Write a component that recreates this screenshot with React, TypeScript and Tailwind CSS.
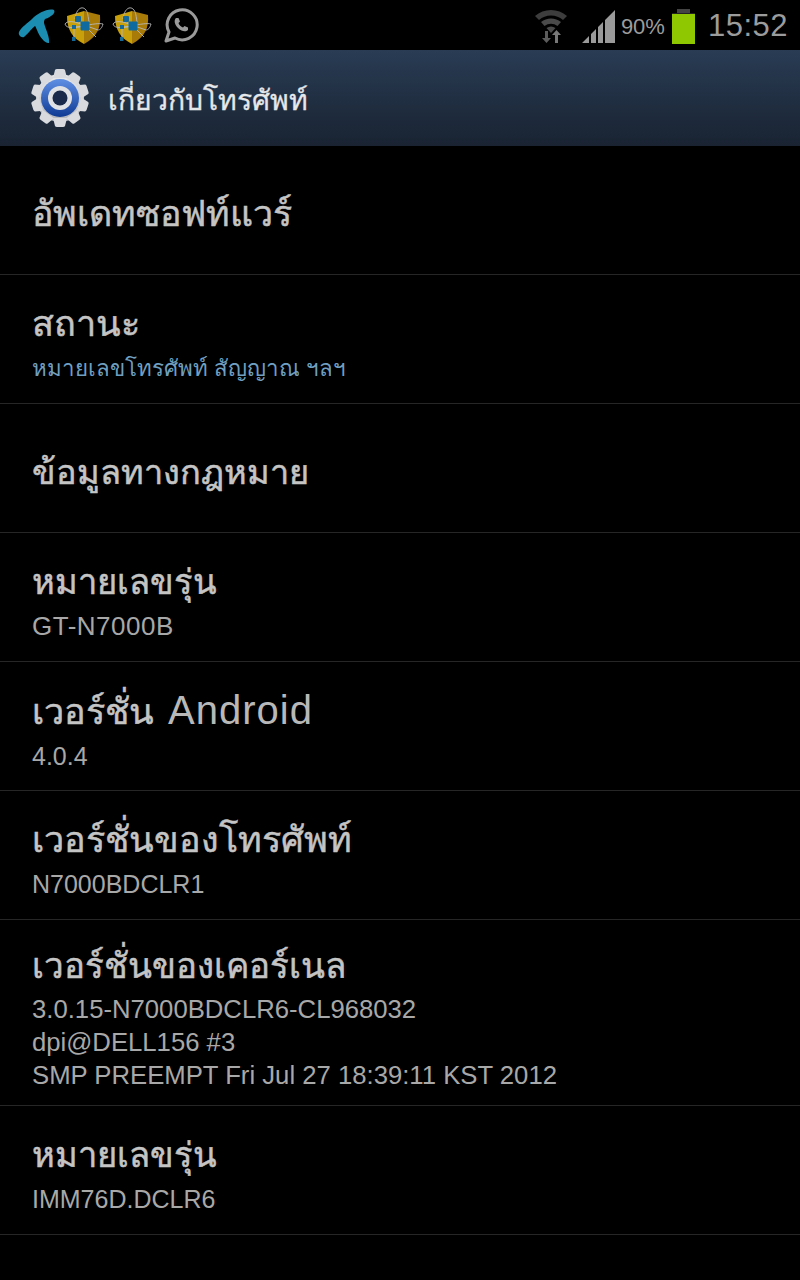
const font = "font-['Liberation_Sans','Noto_Sans','DejaVu_Sans',sans-serif]";

function Shield() {
  return (
    <svg width="40" height="42" viewBox="0 0 40 42">
      <path d="M20 7 L36 11 C37 24 33 33 20 40 Z" fill="#a87a08" />
      <path d="M20 7 L3 12 C3 25 8 34 20 40 Z" fill="#c8a00c" />
      <path d="M1 20 C3 17 8 17 14 19 L34 26 M1 20 C2 25 12 24 20 22 C28 20 36 19 39 20 C38 24 36 26 34 26 M11 15 L21 22 M10 23 L21 22 M11 15 C12 5 18 1 22 6 C24 9 24 12 25 18 M21 22 L32 33 M10 23 L10 34" stroke="#b9b9b9" strokeWidth="0.9" fill="none" />
      <rect x="11" y="12" width="6" height="6" fill="#14689a" rx="1" />
      <rect x="16.5" y="17.5" width="9" height="9" fill="#0f6a9f" rx="1" />
      <rect x="8" y="21" width="4" height="4" fill="#14689a" />
      <rect x="8" y="33" width="3.5" height="4" fill="#14689a" />
    </svg>
  );
}

function Gear() {
  const teeth = Array.from({ length: 10 }, (_, i) => i * 36);
  return (
    <svg width="58" height="60" viewBox="0 0 58 60">
      <defs>
        <linearGradient id="g1b" gradientUnits="userSpaceOnUse" x1="0" y1="0" x2="0" y2="60">
          <stop offset="0" stopColor="#f4f4f4" />
          <stop offset="1" stopColor="#a9adb3" />
        </linearGradient>
        <linearGradient id="g2" x1="0" y1="0" x2="0" y2="1">
          <stop offset="0" stopColor="#5f8fe4" />
          <stop offset="1" stopColor="#0f3a94" />
        </linearGradient>
      </defs>
      <circle cx="29" cy="30" r="24" fill="url(#g1b)" />
      {teeth.map((a) => (
        <path key={a} d="M22 10 L24 2 Q24.5 1 26 1 H32 Q33.5 1 34 2 L36 10 Z" fill="#d8dade" transform={`rotate(${a} 29 30)`} />
      ))}
      <circle cx="29" cy="30" r="19" fill="url(#g2)" />
      <circle cx="29" cy="30" r="12" fill="#dfe1e4" />
      <circle cx="29" cy="30" r="7.5" fill="#1a2a4a" />
    </svg>
  );
}

function Row({
  title,
  sub,
  titleClass = "text-[36px]",
  subClass = "text-[26px]",
  blue,
  tall,
}: {
  title: React.ReactNode;
  sub?: string[];
  titleClass?: string;
  subClass?: string;
  blue?: boolean;
  tall?: boolean;
}) {
  return (
    <div className={`${tall ? "h-[186px]" : "h-[129px]"} border-b border-[#262626] pl-8 pt-[7px] flex flex-col justify-center`}>
      <div className={`${titleClass} leading-[50px] text-[#c4c4c4] [-webkit-text-stroke:0.5px]`}>{title}</div>
      {sub && (
        <div className={`mt-[2px] ${subClass} ${tall ? "leading-[33px]" : "leading-[35px]"} ${blue ? "text-[#6f9fc0]" : "text-[#a8a8a8]"}`}>
          {sub.map((s) => (
            <div key={s}>{s}</div>
          ))}
        </div>
      )}
    </div>
  );
}

export default function App() {
  return (
    <div className={`w-[800px] h-[1280px] bg-black overflow-hidden ${font}`}>
      <div className="h-[50px] flex items-center justify-between pl-[18px] pr-3">
        <div className="flex items-center gap-[8px]">
          <svg width="38" height="38" viewBox="0 0 38 38">
            <path d="M1 26 C3 21 10 17 14 13 C20 7 30 2 36 4 C38 7 33 11 27 13 C26 15 26 15 26 17 C28 24 32 32 31 37 C28 38 22 32 19 24 C18 22 18 21 17 20 C13 23 9 29 6 31 C3 32 0 29 1 26 Z" fill="#1b8db0" />
          </svg>
          <Shield />
          <Shield />
          <svg width="36" height="36" viewBox="0 0 36 36" className="ml-[3px]">
            <path d="M3 34 L6 25 A15 15 0 1 1 12 31 Z" fill="none" stroke="#9a9a9a" strokeWidth="3" strokeLinejoin="round" />
            <path d="M13 11 C11 13 11 17 15 21 C19 25 23 25 25 23 L25 20.5 L21.5 19 L20 20.5 C18 20 16 18 15.5 16 L17 14.5 L15.5 11 Z" fill="#9a9a9a" />
          </svg>
        </div>
        <div className="flex items-center">
          <svg width="34" height="36" viewBox="0 0 34 36" className="mr-[14px]">
            <path d="M1 9 A24 24 0 0 1 33 9 L29 13 A18 18 0 0 0 5 13 Z" fill="#3d3d3d" />
            <path d="M7 15 A16 16 0 0 1 27 15 L23.5 19 A11 11 0 0 0 10.5 19 Z" fill="#4a4a4a" />
            <path d="M12.5 21 A8 8 0 0 1 21.5 21 L17 26 Z" fill="#4a4a4a" />
            <path d="M11 24 V31 H8 L12.5 36 L17 31 H14 V24 Z" fill="#5c5c5c" />
            <path d="M21 36 V28 H18 L22.5 23 L27 28 H24 V36 Z" fill="#777" />
          </svg>
          <svg width="33" height="33" viewBox="0 0 33 33" className="mt-[2px]">
            <path d="M0 33 L7 26 V33 Z M9 24 L14 19 V33 H9 Z M16 17 L21 12 V33 H16 Z M23 10 L33 0 V33 H23 Z" fill="#9a9a9a" />
          </svg>
          <span className="ml-[6px] mt-[3px] text-[22px] text-[#9c9c9c] leading-none">90%</span>
          <div className="ml-[7px] mt-[2px] flex flex-col items-center w-[23px]">
            <div className="w-[13px] h-[4px] bg-[#444]" />
            <div className="w-[23px] h-[31px] bg-[#8fc800] border-t border-[#222]" />
          </div>
          <span className="ml-[13px] text-[31px] leading-none tracking-[0.5px] text-[#9c9c9c]">15:52</span>
        </div>
      </div>
      <div className="h-[96px] bg-gradient-to-b from-[#293c54] to-[#192332] flex items-center pl-[31px] gap-[19px]">
        <Gear />
        <span className="text-[28.3px] pt-[4px] text-[#e4e7ea] [-webkit-text-stroke:0.3px]">เกี่ยวกับโทรศัพท์</span>
      </div>
      <Row title="อัพเดทซอฟท์แวร์" titleClass="text-[35.8px]" />
      <Row title="สถานะ" sub={["หมายเลขโทรศัพท์ สัญญาณ ฯลฯ"]} subClass="text-[22.3px]" blue />
      <Row title="ข้อมูลทางกฎหมาย" titleClass="text-[34.4px]" />
      <Row title="หมายเลขรุ่น" titleClass="text-[34.5px]" sub={["GT-N7000B"]} subClass="text-[26px] tracking-[0.5px]" />
      <Row
        title={
          <>
            เวอร์ชั่น{" "}
            <span className="ml-[4px] text-[40px] tracking-[1px] text-[#b8b8b8] [-webkit-text-stroke:0px]">Android</span>
          </>
        }
        sub={["4.0.4"]}
        subClass="text-[25px]"
      />
      <Row title="เวอร์ชั่นของโทรศัพท์" sub={["N7000BDCLR1"]} subClass="text-[25px]" />
      <Row
        title="เวอร์ชั่นของเคอร์เนล"
        titleClass="text-[35px]"
        sub={["3.0.15-N7000BDCLR6-CL968032", "dpi@DELL156 #3", "SMP PREEMPT Fri Jul 27 18:39:11 KST 2012"]}
        subClass="text-[25.7px]"
        tall
      />
      <Row title="หมายเลขรุ่น" titleClass="text-[34.5px]" sub={["IMM76D.DCLR6"]} subClass="text-[25px]" />
    </div>
  );
}
